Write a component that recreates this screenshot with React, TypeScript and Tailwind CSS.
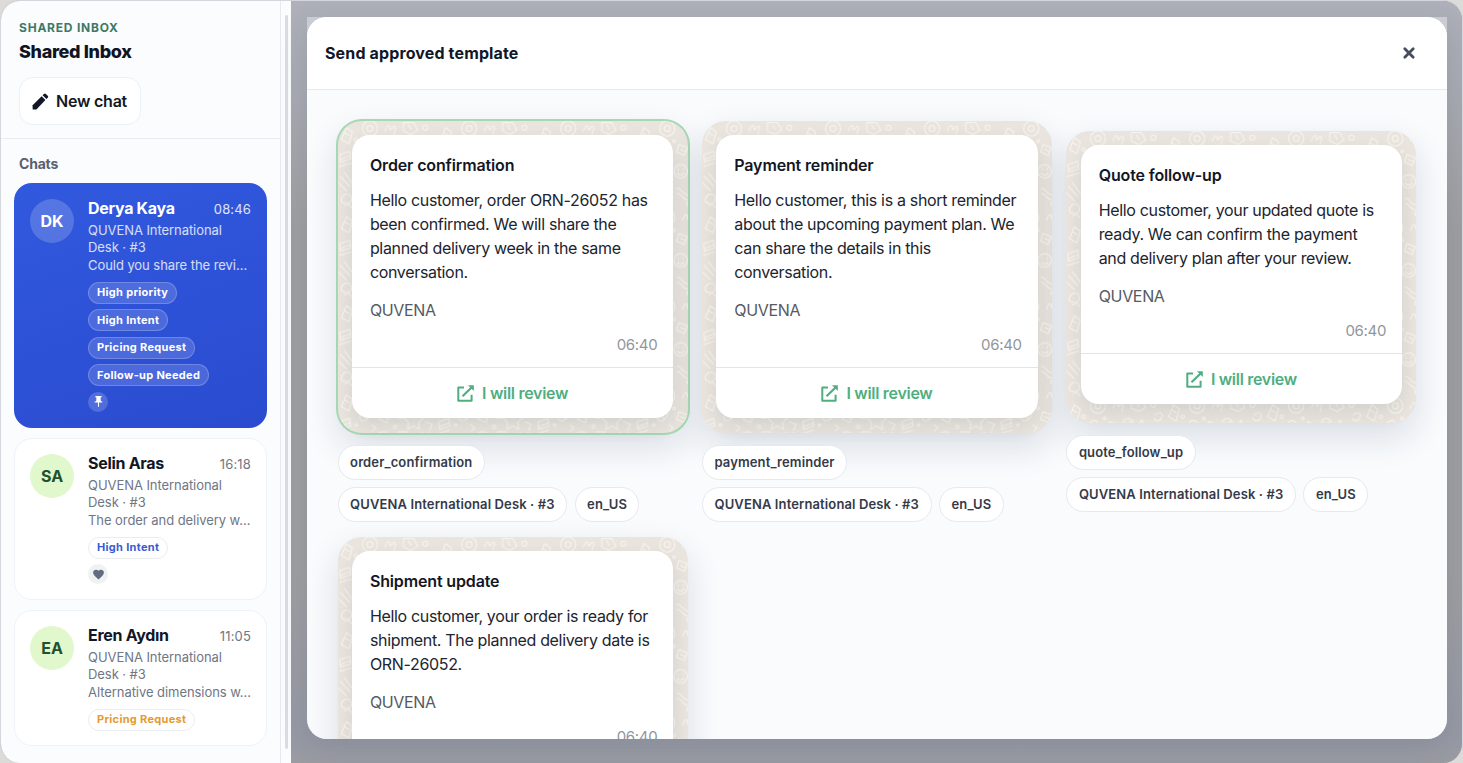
import { useState } from "react";
import { MdPushPin, MdFavorite } from "react-icons/md";

type Tag = { label: string; tone: "light" | "blue" | "amber" };

const chats: { initials: string; name: string; time: string; text: string; tags: Tag[]; icon?: "pin" | "heart"; height: string }[] = [
    {
        initials: "DK",
        name: "Derya Kaya",
        time: "08:46",
        text: "Could you share the revi…",
        tags: [
            { label: "High priority", tone: "light" },
            { label: "High Intent", tone: "light" },
            { label: "Pricing Request", tone: "light" },
            { label: "Follow-up Needed", tone: "light" },
        ],
        icon: "pin",
        height: "h-[245px]",
    },
    {
        initials: "SA",
        name: "Selin Aras",
        time: "16:18",
        text: "The order and delivery w…",
        tags: [{ label: "High Intent", tone: "blue" }],
        icon: "heart",
        height: "h-[162px]",
    },
    {
        initials: "EA",
        name: "Eren Aydın",
        time: "11:05",
        text: "Alternative dimensions w…",
        tags: [{ label: "Pricing Request", tone: "amber" }],
        height: "h-[136px]",
    },
];

const templates = [
    {
        id: "order_confirmation",
        title: "Order confirmation",
        lines: ["Hello customer, order ORN-26052 has", "been confirmed. We will share the", "planned delivery week in the same", "conversation."],
    },
    {
        id: "payment_reminder",
        title: "Payment reminder",
        lines: ["Hello customer, this is a short reminder", "about the upcoming payment plan. We", "can share the details in this", "conversation."],
    },
    {
        id: "quote_follow_up",
        title: "Quote follow-up",
        lines: ["Hello customer, your updated quote is", "ready. We can confirm the payment", "and delivery plan after your review."],
    },
    {
        id: "shipment_update",
        title: "Shipment update",
        lines: ["Hello customer, your order is ready for", "shipment. The planned delivery date is", "ORN-26052."],
    },
];

const tagTone = {
    light: "border-white/20 bg-white/15 text-white",
    blue: "border-[#e9edf2] bg-white text-[#3a5bd0]",
    amber: "border-[#e9edf2] bg-white text-[#e59a2f]",
};

// chat wallpaper doodles behind every bubble
const Doodles = ({ id }: { id: string }) => (
    <svg className="absolute inset-0 h-full w-full" aria-hidden="true">
        <defs>
            <pattern id={id} width="118" height="106" patternUnits="userSpaceOnUse" patternTransform="scale(0.84)">
                <g fill="none" stroke="#f6f3ec" strokeWidth="1.4" strokeLinecap="round" strokeLinejoin="round">
                    <circle cx="38" cy="9" r="9" />
                    <circle cx="38" cy="9" r="3.5" />
                    <path d="M4 22l6-14 7 5-4 14zM8 14l5 3" />
                    <path d="M56 12c3-8 6-8 6-3s4-5 6-2-3 7-1 9" />
                    <path d="M78 2h12l5 9-8 5-9-4zM84 5l3 5" />
                    <circle cx="104" cy="8" r="3" />
                    <path d="M106 20c5-5 10-2 8 3s-8 5-9 1" />
                    <path d="M2 40l12-4 1 9-12 4zM3 46l12-5M2 54l13-4" />
                    <path d="M28 30c6-8 14 0 8 6s-14 2-8-6M31 33l4 4" />
                    <path d="M52 28l10 4-4 9-9-4zM54 34l5 2" />
                    <circle cx="74" cy="30" r="6" />
                    <path d="M71 29l3 3 4-5" />
                    <path d="M90 26l4 8 8 1-6 6 1 8-7-4-7 4 1-8-6-6 8-1z" />
                    <path d="M3 66l11 12M8 62l9 12M1 74l9 9" />
                    <path d="M24 56h14v10H24zM24 56l7 6 7-6" />
                    <circle cx="54" cy="60" r="8" />
                    <path d="M50 62c2 3 6 3 8 0M51 57v1M57 57v1" />
                    <path d="M72 52c0 8 10 8 10 0M72 52h10M77 58v8" />
                    <path d="M98 62c-7-8 3-12 6-5 3-7 12-3 5 5l-5 6z" />
                    <circle cx="20" cy="84" r="2" />
                    <path d="M4 92c4-7 11-6 12 0s-8 8-12 4z" />
                    <path d="M28 80l12 2-2 13-12-2zM31 85l6 1" />
                    <path d="M50 80c6 0 6 8 12 8M50 86c5 0 6 8 12 8" />
                    <path d="M74 78l12 12M86 78L74 90" />
                    <circle cx="103" cy="86" r="7" />
                    <path d="M103 79v14M96 86h14" />
                    <circle cx="66" cy="70" r="1.5" />
                    <circle cx="22" cy="44" r="1.5" />
                    <circle cx="64" cy="99" r="2.5" />
                    <circle cx="21" cy="22" r="2" />
                    <circle cx="46" cy="24" r="1.5" />
                    <circle cx="68" cy="46" r="2" />
                    <circle cx="90" cy="74" r="2" />
                    <path d="M84 98l8 6M34 101l7-2M8 101l5-2 3 4M104 40l8 3-3 7M40 44l5 3-4 4" />
                </g>
            </pattern>
        </defs>
        <rect width="100%" height="100%" fill={`url(#${id})`} />
    </svg>
);

const PencilIcon = () => (
    <svg width="17" height="17" viewBox="0 0 17 17" fill="currentColor">
        <path d="M.6 16V12.2L9.6 3.2 13.4 7 4.4 16.4H1a.4.4 0 0 1-.4-.4z" />
        <path d="M10.6 2.2l1.3-1.3a1.4 1.4 0 0 1 2 0l1.8 1.8a1.4 1.4 0 0 1 0 2L14.4 6z" />
    </svg>
);

const ReviewIcon = () => (
    <svg width="17" height="17" viewBox="0 0 17 17" fill="none" stroke="currentColor" strokeWidth="2" strokeLinejoin="round">
        <path d="M7 2.4H1.3v13.3h13.3V9.8" />
        <path d="M5.5 11.3L14.3 2.7" strokeWidth="2.2" />
        <path d="M11 .3h5.8v5.8z" fill="currentColor" stroke="none" />
    </svg>
);

const Sidebar = () => (
    <aside className="flex w-[290px] shrink-0 bg-[#fafcfe]">
        <div className="flex w-[280px] shrink-0 flex-col border-r border-[#e6e9ef]">
            <div className="h-[138px] border-b border-[#e8ebf0] pl-[18px] pt-[19px]">
                <p className="text-[12px] font-bold leading-4 tracking-[0.78px] text-[#3d7a66]">SHARED INBOX</p>
                <h1 className="mt-[4px] text-[18px] font-extrabold leading-6 tracking-[-0.34px] text-[#0f1424]">Shared Inbox</h1>
                <button className="mt-[13px] flex h-[48px] w-[122px] items-center gap-[7px] rounded-[14px] border border-[#edf0f4] bg-white pl-[12px] text-base font-semibold tracking-[-0.22px] text-[#121726]">
                    <PencilIcon />
                    <span>New chat</span>
                </button>
            </div>
            <h2 className="mt-[15px] pl-[18px] text-sm font-bold leading-5 tracking-[-0.2px] text-[#5a606e]">Chats</h2>
            <div className="mt-[9px] flex flex-col gap-[10px] pl-[13px]">
                {chats.map((chat, ind) => {
                    const active = ind === 0;
                    return (
                        <div
                            key={chat.name}
                            className={`${chat.height} flex w-[253px] gap-[14px] rounded-[18px] border px-[15px] pt-[15px] ${active ? "border-transparent bg-linear-160 from-[#3159de] to-[#2a4bd0] bg-origin-border" : "border-[#eff2f6] bg-white"}`}
                        >
                            <div className={`flex size-11 shrink-0 items-center justify-center rounded-full text-base font-bold ${active ? "bg-white/18 text-white" : "bg-[#e1f8cc] text-[#1f5130]"}`}>
                                {chat.initials}
                            </div>
                            <div className="flex min-w-0 flex-1 flex-col items-start">
                                <div className="-mt-px flex w-full items-start justify-between">
                                    <span className={`-mt-px text-base font-bold leading-[22px] tracking-[-0.3px] ${active ? "text-white" : "text-[#121726]"}`}>{chat.name}</span>
                                    <span className={`text-[13px] leading-[22px] tracking-[0.15px] ${active ? "text-white/85" : "text-[#6f7685]"}`}>{chat.time}</span>
                                </div>
                                <div className={`mt-[1.5px] w-full whitespace-nowrap text-[13px] leading-[17.6px] tracking-[-0.06px] ${active ? "text-white/80" : "text-[#6f7685]"}`}>
                                    <p>QUVENA International<br />Desk · #3</p>
                                    <p>{chat.text}</p>
                                </div>
                                <div className="mt-[7.3px] flex flex-col items-start gap-[5.5px]">
                                    {chat.tags.map((tag) => (
                                        <span key={tag.label} className={`flex h-[22px] items-center rounded-full border px-2 text-[11px] font-bold tracking-[0.31px] ${tagTone[tag.tone]}`}>
                                            {tag.label}
                                        </span>
                                    ))}
                                </div>
                                {chat.icon && (
                                    <span className={`mt-[5.5px] flex size-5 items-center justify-center rounded-full ${active ? "bg-white/18 text-white" : "bg-[#f0f1f3] text-[#626b80]"}`}>
                                        {chat.icon === "pin" ? <MdPushPin size={13} /> : <MdFavorite size={13} />}
                                    </span>
                                )}
                            </div>
                        </div>
                    );
                })}
            </div>
        </div>
        <div className="ml-1 mt-[14px] h-[734px] w-[3px] rounded-full bg-[#d9dce4]" />
    </aside>
);

const Pill = ({ children }: { children: React.ReactNode }) => (
    <span className="flex h-[35px] items-center rounded-full border border-[#e6e9ee] bg-white px-[11.5px] pt-px text-[13px] font-semibold tracking-[0.12px] text-[#343a48]">{children}</span>
);

const App = () => {
    const [selected, setSelected] = useState("order_confirmation");

    return (
        <div className="h-[763px] w-[1463px] overflow-hidden bg-[#dcdbd8] font-[Inter,sans-serif]">
            <div className="flex h-[763px] w-[1463px] overflow-hidden rounded-[20px] border border-b-0 border-[#d3d6dc] bg-[#a0a1a5]">
                <Sidebar />
                <main className="flex-1 bg-[linear-gradient(180deg,#aeb1b9_0%,#a8abb2_12%,#9f9fa1_30%,#9f9fa1_75%,#969aa5_96%,#9a9ca2_100%)] pl-4 pt-4">
                    <div className="h-[722px] w-[1140px] rounded-b-[20px] bg-[#c9ccd3] shadow-[0_8px_30px_rgba(30,41,70,0.12)]">
                        <section className="flex h-full flex-col overflow-hidden rounded-[20px] bg-[#f9fbfd]">
                            <header className="flex h-[73px] shrink-0 items-center justify-between border-b border-[#e8ebee] bg-white pl-[18px] pr-[31px]">
                                <h2 className="text-base font-bold tracking-[0.14px] text-[#121726]">Send approved template</h2>
                                <button aria-label="Close">
                                    <svg width="14" height="14" viewBox="0 0 14 14" stroke="#454c5e" strokeWidth="2.8" strokeLinecap="round">
                                        <path d="M2.8 2.8l8.4 8.4M11.2 2.8l-8.4 8.4" />
                                    </svg>
                                </button>
                            </header>
                            <div className="grid grid-cols-[repeat(3,350px)] content-start items-center gap-x-[14.4px] gap-y-[15px] overflow-hidden pl-[30.6px] pt-[31px]">
                                {templates.map((item) => (
                                    <div key={item.id} onClick={() => setSelected(item.id)} className="flex cursor-pointer flex-col">
                                        <div
                                            className={`relative min-h-[292px] rounded-[24px] bg-[#e9e4dd] px-[14.3px] pb-[15px] pt-[14px] ${selected === item.id ? "shadow-[0_0_0_2px_#a5d8b3,0_14px_34px_rgba(30,41,70,0.14)]" : "shadow-[0_14px_34px_rgba(30,41,70,0.14)]"}`}
                                        >
                                            <div className="absolute inset-0 overflow-hidden rounded-[24px]">
                                                <Doodles id={`doodle-${item.id}`} />
                                            </div>
                                            <div className="relative overflow-hidden rounded-[18px] bg-white shadow-[0_8px_18px_rgba(30,41,70,0.10)]">
                                                <div className="px-[18px] pt-[17.5px] text-base leading-6 tracking-[-0.33px]">
                                                    <h3 className="font-semibold tracking-[-0.14px] text-[#121726]">{item.title}</h3>
                                                    <p className="mt-[11.5px] whitespace-nowrap text-[#20242e]">
                                                        {item.lines.map((line) => (
                                                            <span key={line} className="block">{line}</span>
                                                        ))}
                                                    </p>
                                                    <p className="mt-[13.5px] text-[#555a63]">QUVENA</p>
                                                    <p className="-mr-[2px] mt-[11.5px] pb-[10px] text-right text-[15px] leading-6 text-[#92969c]">06:40</p>
                                                </div>
                                                <div className="flex h-[51px] items-center justify-center gap-2 border-t border-[#e3e6e8] text-base font-semibold tracking-[-0.3px] text-[#4fae80]">
                                                    <ReviewIcon />
                                                    <span>I will review</span>
                                                </div>
                                            </div>
                                        </div>
                                        <div className="relative mt-3 flex flex-col items-start gap-[7px]">
                                            <Pill>{item.id}</Pill>
                                            <div className="flex gap-[7.5px]">
                                                <Pill>QUVENA International Desk · #3</Pill>
                                                <Pill>en_US</Pill>
                                            </div>
                                        </div>
                                    </div>
                                ))}
                            </div>
                        </section>
                    </div>
                </main>
            </div>
        </div>
    );
};

export default App;
